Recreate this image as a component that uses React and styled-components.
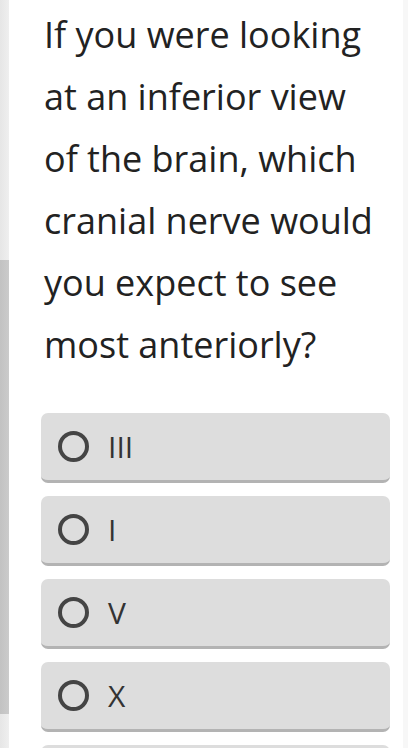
import styled, { createGlobalStyle } from 'styled-components';

const GlobalStyle = createGlobalStyle`
  html, body {
    margin: 0;
    padding: 0;
    background: #ffffff;
  }
  body {
    font-family: "Open Sans", "Noto Sans", sans-serif;
  }
`;

const options = ['III', 'I', 'V', 'X', ''];

const App = () => {
  return (
    <>
      <GlobalStyle />
      <Page>
        <Rail>
          <RailTop />
          <RailThumb />
          <RailBottom />
        </Rail>
        <Content>
          <Question>
            If you were looking at an inferior view of the brain, which cranial
            nerve would you expect to see most anteriorly?
          </Question>
          <Options>
            {options.map((label, i) => (
              <Option key={i}>
                <Radio />
                <Label>{label}</Label>
              </Option>
            ))}
          </Options>
        </Content>
        <Edge />
      </Page>
    </>
  );
};

const Page = styled.div`
  display: flex;
  width: 408px;
  height: 748px;
  overflow: hidden;
`;

const Rail = styled.div`
  display: flex;
  flex-direction: column;
  width: 9px;
  flex-shrink: 0;
`;

const RailTop = styled.div`
  height: 260px;
  background: linear-gradient(to right, #e6e6e6, #efefef);
`;

const RailThumb = styled.div`
  height: 454px;
  background: linear-gradient(to right, #c2c2c2, #cbcbcb);
`;

const RailBottom = styled.div`
  flex: 1;
  background: linear-gradient(to right, #e6e6e6, #efefef);
`;

const Content = styled.div`
  flex: 1;
  padding: 4px 13px 0 32px;
`;

const Edge = styled.div`
  width: 5px;
  flex-shrink: 0;
  background: #f7f7f7;
`;

const Question = styled.div`
  font-size: 36px;
  line-height: 62px;
  color: #222222;
  padding: 0 12px 0 3px;
  margin-bottom: 37px;
`;

const Options = styled.div`
  display: flex;
  flex-direction: column;
  gap: 13px;
`;

const Option = styled.div`
  display: flex;
  align-items: center;
  height: 67px;
  padding-left: 17px;
  background: #dddddd;
  border-radius: 7px;
  border-bottom: 3px solid #b3b3b3;
  flex-shrink: 0;
`;

const Radio = styled.div`
  width: 23px;
  height: 23px;
  border: 4px solid #444444;
  border-radius: 50%;
  flex-shrink: 0;
`;

const Label = styled.div`
  margin-left: 19px;
  font-size: 30px;
  color: #333333;
`;

export default App;
